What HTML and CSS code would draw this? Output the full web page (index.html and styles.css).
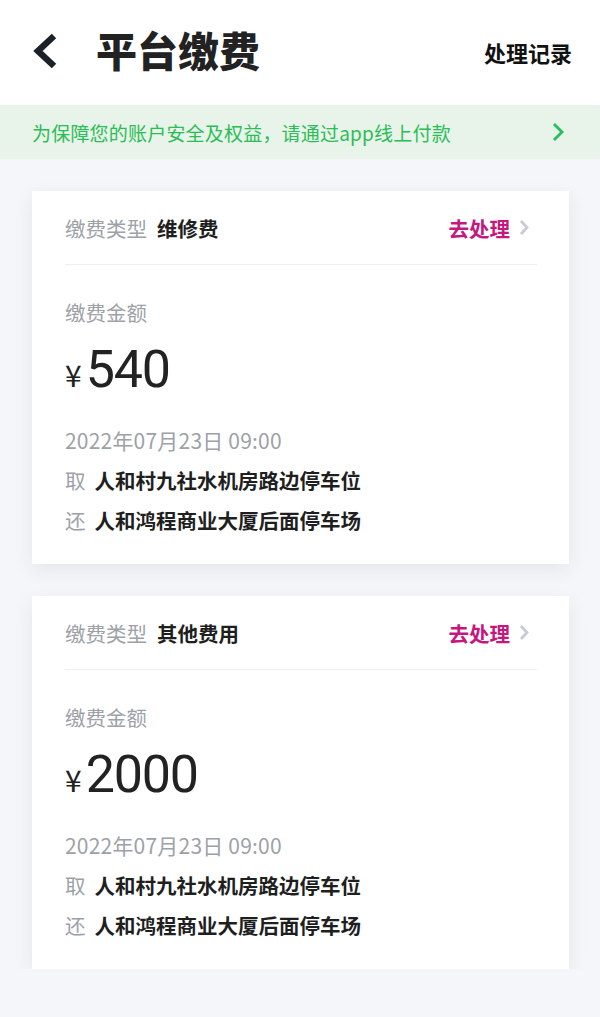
FILE: index.html
```html
<!DOCTYPE html>
<html>
	<head>
		<meta charset="UTF-8">
		<title>平台缴费</title>
		<link rel="stylesheet" href="styles.css">
	</head>
	<body>
		<!--顶部标题栏-->
		<div class="header">
			<a class="back" href="javascript:;">
				<svg width="26" height="36" viewBox="0 0 26 36">
					<path d="M22 3 L6 18 L22 33" fill="none" stroke="#1b2126" stroke-width="6.5" stroke-linejoin="miter"/>
				</svg>
			</a>
			<h1 class="title">平台缴费</h1>
			<a class="record" href="javascript:;">处理记录</a>
		</div>

		<!--提示条-->
		<div class="notice">
			<span>为保障您的账户安全及权益，请通过app线上付款</span>
			<svg width="12" height="20" viewBox="0 0 12 20">
				<path d="M2 2 L10 10 L2 18" fill="none" stroke="#23c15a" stroke-width="2.8"/>
			</svg>
		</div>

		<!--缴费列表-->
		<div class="list">
			<div class="card">
				<div class="card-top">
					<div class="type"><span class="gray">缴费类型</span><b>维修费</b></div>
					<a class="go" href="javascript:;">去处理
						<svg width="10" height="17" viewBox="0 0 10 17">
							<path d="M2 2 L8 8.5 L2 15" fill="none" stroke="#c7ccd4" stroke-width="2.8"/>
						</svg>
					</a>
				</div>
				<div class="card-body">
					<div class="gray label">缴费金额</div>
					<div class="money"><span class="yen">¥</span><span class="num">540</span></div>
					<div class="gray line date">2022年07月23日 09:00</div>
					<div class="line"><span class="gray">取</span><b>人和村九社水机房路边停车位</b></div>
					<div class="line"><span class="gray">还</span><b>人和鸿程商业大厦后面停车场</b></div>
				</div>
			</div>

			<div class="card">
				<div class="card-top">
					<div class="type"><span class="gray">缴费类型</span><b>其他费用</b></div>
					<a class="go" href="javascript:;">去处理
						<svg width="10" height="17" viewBox="0 0 10 17">
							<path d="M2 2 L8 8.5 L2 15" fill="none" stroke="#c7ccd4" stroke-width="2.8"/>
						</svg>
					</a>
				</div>
				<div class="card-body">
					<div class="gray label">缴费金额</div>
					<div class="money"><span class="yen">¥</span><span class="num">2000</span></div>
					<div class="gray line date">2022年07月23日 09:00</div>
					<div class="line"><span class="gray">取</span><b>人和村九社水机房路边停车位</b></div>
					<div class="line"><span class="gray">还</span><b>人和鸿程商业大厦后面停车场</b></div>
				</div>
			</div>
		</div>
	</body>
</html>
```

FILE: styles.css
```css
*{
	margin: 0;
	padding: 0;
}

body{
	/*页面背景*/
	background-color: #f5f6f9;
	font-family: "Noto Sans CJK SC", "Noto Sans", sans-serif;
	color: #1f1f1f;
}

a{
	text-decoration: none;
	color: inherit;
}

/*顶部标题栏*/
.header{
	height: 105px;
	background-color: #fff;
	display: flex;
	align-items: center;
	padding: 0 28px 8px 32px;
	box-sizing: border-box;
}

.back{
	display: flex;
	margin-top: 4px;
}

.title{
	font-size: 41px;
	font-weight: 900;
	color: #222;
	margin-left: 38px;
	flex: 1;
}

.record{
	font-size: 22px;
	font-weight: bold;
	color: #111;
	margin-top: 6px;
}

/*绿色提示条*/
.notice{
	height: 54px;
	background-color: #e8f3ea;
	display: flex;
	align-items: center;
	justify-content: space-between;
	padding: 0 36px 0 32px;
	font-size: 19px;
	letter-spacing: 0.2px;
	color: #2bbd56;
}

/*列表*/
.list{
	padding: 32px 31px 0 32px;
	display: flex;
	flex-direction: column;
	gap: 32px;
}

.card{
	background-color: #fff;
	padding: 0 32px 0 33px;
	box-shadow: 0 6px 18px rgba(40, 50, 80, 0.08);
}

.gray{
	color: #9da1a8;
}

/*卡片上半部分*/
.card-top{
	height: 73px;
	display: flex;
	align-items: center;
	justify-content: space-between;
	border-bottom: 1px solid #eeeff2;
	font-size: 20.5px;
}

.type b{
	margin-left: 10px;
}

.go{
	color: #c5177d;
	font-weight: bold;
	display: flex;
	align-items: center;
	gap: 9px;
	margin-right: 8px;
}

/*卡片下半部分*/
.card-body{
	padding: 33px 0 24px;
	font-size: 20.5px;
}

.label{
	line-height: 28px;
	margin-bottom: 12px;
}

.money{
	display: flex;
	align-items: baseline;
	height: 64px;
	line-height: 64px;
	margin-bottom: 18px;
}

.yen{
	font-size: 30px;
	margin-right: 4px;
	color: #222;
}

.num{
	font-family: Roboto, "Noto Sans", sans-serif;
	font-size: 52px;
	letter-spacing: -1.2px;
	color: #222;
}

.line{
	line-height: 40px;
}

.date{
	font-size: 21px;
	letter-spacing: 0.2px;
}

.line b{
	margin-left: 9px;
}
```
